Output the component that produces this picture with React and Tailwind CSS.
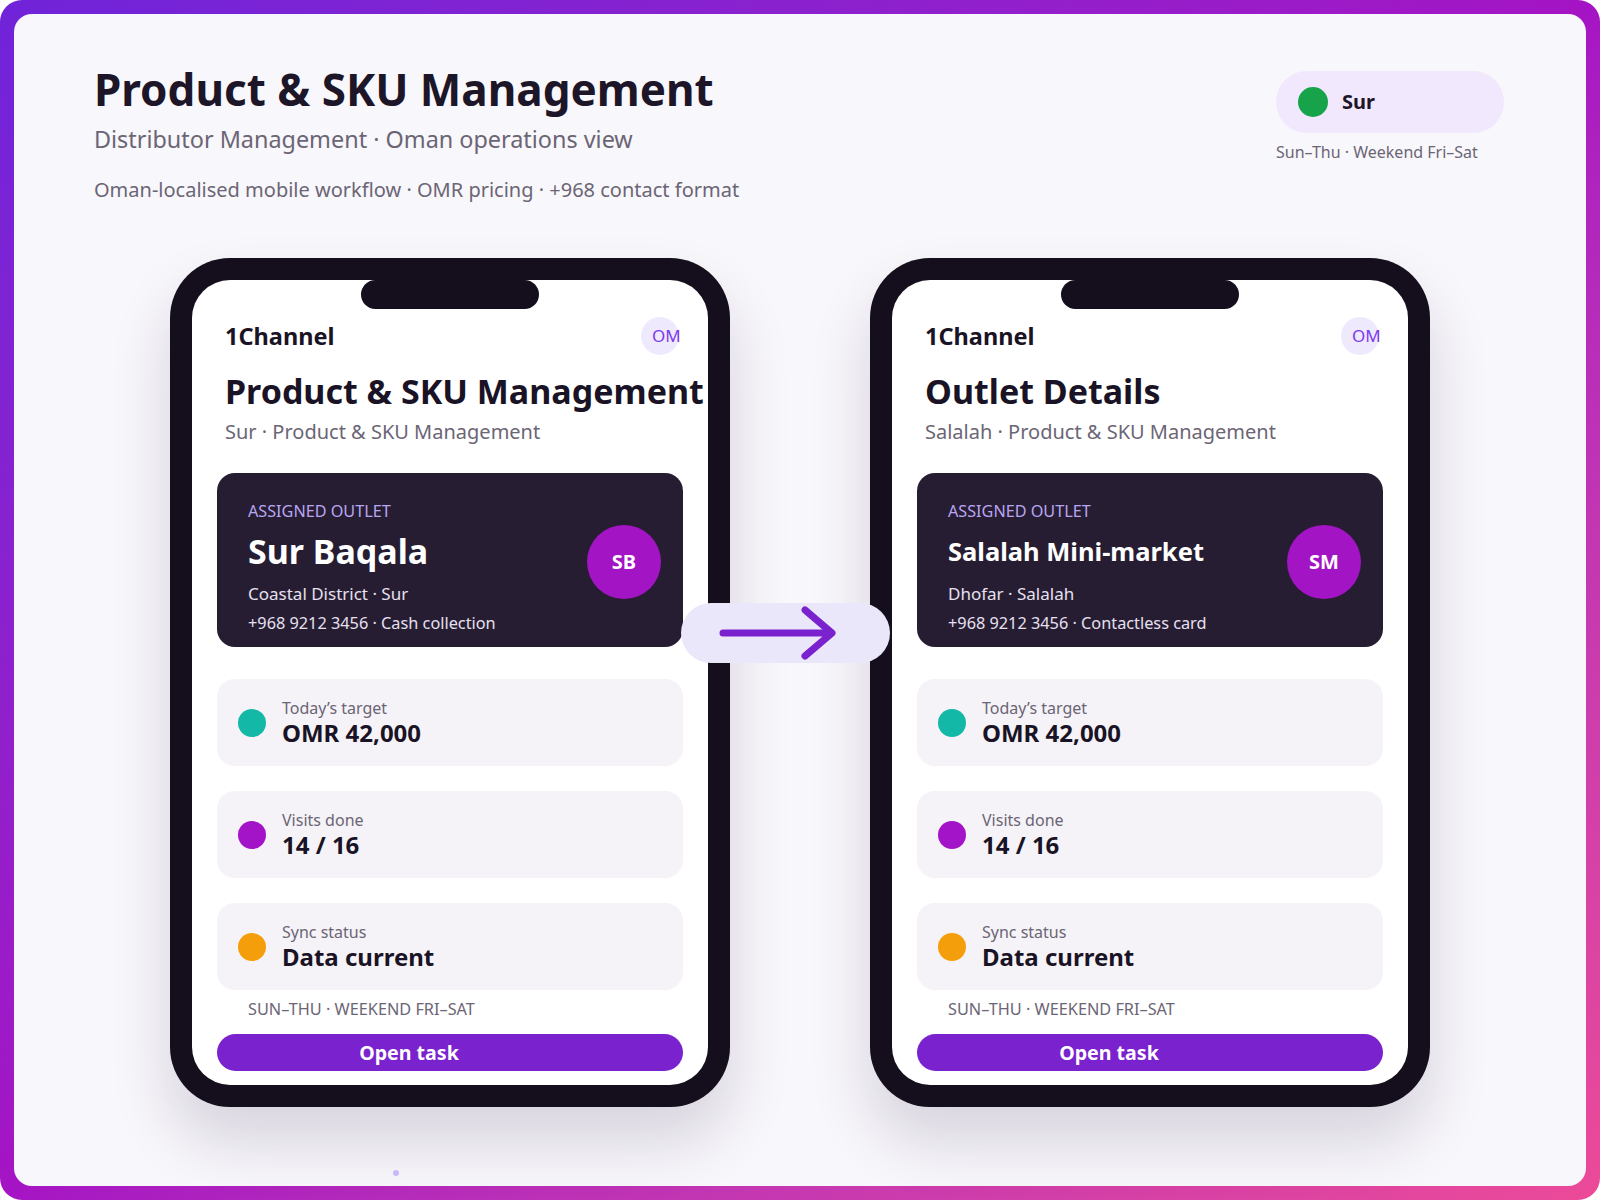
import React from 'react';

const font = { fontFamily: '"Noto Sans", "Open Sans", sans-serif' };

const stats = [
  { label: 'Today’s target', value: 'OMR 42,000', dot: 'bg-[#14b8a6]' },
  { label: 'Visits done', value: '14 / 16', dot: 'bg-[#a313c7]' },
  { label: 'Sync status', value: 'Data current', dot: 'bg-[#f59e0b]' },
];

const phones = [
  {
    title: 'Product & SKU Management',
    sub: 'Sur · Product & SKU Management',
    outlet: 'Sur Baqala',
    outletSize: 'text-[34px]',
    area: 'Coastal District · Sur',
    contact: '+968 9212 3456 · Cash collection',
    initials: 'SB',
  },
  {
    title: 'Outlet Details',
    sub: 'Salalah · Product & SKU Management',
    outlet: 'Salalah Mini-market',
    outletSize: 'text-[25.5px]',
    area: 'Dhofar · Salalah',
    contact: '+968 9212 3456 · Contactless card',
    initials: 'SM',
  },
];

const Phone = ({ p }) => (
  <div className="w-[560px] h-[849px] rounded-[60px] bg-[#150e1c] p-[22px] shadow-[0_34px_60px_rgba(45,25,70,0.16)]">
    <div className="relative h-full rounded-[38px] bg-white overflow-hidden flex flex-col">
      <div className="absolute top-0 left-[169px] w-[178px] h-[29px] rounded-full bg-[#150e1c]" />

      <div className="flex items-center justify-between pt-[37px] pl-[33px] pr-[29px]">
        <span className="text-[23.5px] leading-[38px] font-bold text-[#1a1325]">1Channel</span>
        <div className="w-[38px] h-[38px] rounded-full bg-[#efe9fd] flex items-center pl-[11px]">
          <span className="text-[17px] text-[#7c3aed]">OM</span>
        </div>
      </div>

      <div className="mt-[15px] pl-[33px] text-[34px] leading-[42px] font-bold text-[#1a1325] whitespace-nowrap">
        {p.title}
      </div>
      <div className="mt-[6px] pl-[33px] text-[20px] leading-[28px] text-[#6b6575]">{p.sub}</div>

      <div className="mt-[27px] mx-[25px] h-[174px] rounded-[18px] bg-[#261d33] flex items-center justify-between pl-[31px] pr-[22px]">
        <div className="self-start pt-[27px]">
          <div className="text-[16.2px] leading-[22px] text-[#b9a6f0] uppercase">Assigned outlet</div>
          <div className={`mt-[8px] ${p.outletSize} leading-[42px] font-bold text-white`}>{p.outlet}</div>
          <div className="mt-[10px] text-[17px] leading-[24px] text-[#e6e0ef]">{p.area}</div>
          <div className="mt-[6px] text-[16.3px] leading-[22px] text-[#e6e0ef]">{p.contact}</div>
        </div>
        <div className="mt-[4px] w-[74px] h-[74px] rounded-full bg-[#a314c4] flex items-center justify-center text-white text-[20px] font-bold">
          {p.initials}
        </div>
      </div>

      <div className="mt-[32px] mx-[25px] flex flex-col gap-[25px]">
        {stats.map((s) => (
          <div key={s.label} className="h-[87px] rounded-[18px] bg-[#f5f3f7] flex items-center pl-[21px] gap-[16px]">
            <div className={`w-[28px] h-[28px] rounded-full ${s.dot}`} />
            <div>
              <div className="text-[16px] leading-[20px] text-[#6b6575]">{s.label}</div>
              <div className="text-[24px] leading-[30px] font-bold text-[#1a1325]">{s.value}</div>
            </div>
          </div>
        ))}
      </div>

      <div className="mt-[8px] pl-[56px] text-[16.3px] leading-[22px] text-[#6b6575] uppercase">
        Sun–Thu · Weekend Fri–Sat
      </div>

      <button className="mt-[14px] mx-[25px] h-[37px] rounded-full bg-[#7b22cf] text-white text-[19.6px] font-bold pr-[82px]">
        Open task
      </button>
    </div>
  </div>
);

export default function App() {
  return (
    <div style={font} className="w-[1600px] h-[1200px] p-[14px] rounded-[22px] bg-gradient-to-br from-[#7023d9] via-[#a514c4] to-[#ec4a98]">
      <div className="relative h-full rounded-[18px] bg-[#f8f7fb] pt-[50px]">
        <div className="flex justify-between pl-[80px] pr-[82px]">
          <div>
            <h1 className="text-[44px] leading-[50px] font-bold text-[#1d1528]">Product &amp; SKU Management</h1>
            <p className="mt-[10px] text-[23.4px] leading-[30px] text-[#6b6575]">
              Distributor Management · Oman operations view
            </p>
            <p className="mt-[23px] text-[20px] leading-[26px] text-[#6b6575]">
              Oman-localised mobile workflow · OMR pricing · +968 contact format
            </p>
          </div>
          <div className="mt-[7px] w-[228px]">
            <div className="h-[62px] rounded-full bg-[#f1e8fd] flex items-center pl-[22px] gap-[14px]">
              <div className="w-[30px] h-[30px] rounded-full bg-[#16a34a]" />
              <span className="text-[20px] font-bold text-[#1d1528]">Sur</span>
            </div>
            <div className="mt-[8px] text-[16px] leading-[22px] text-[#6b6575]">Sun–Thu · Weekend Fri–Sat</div>
          </div>
        </div>

        <div className="mt-[55px] flex justify-center gap-[140px]">
          {phones.map((p) => (
            <Phone key={p.initials} p={p} />
          ))}
        </div>

        <div className="absolute left-[667px] top-[589px] w-[209px] h-[60px] rounded-full bg-[#ebe7fb]">
          <svg width="209" height="60" viewBox="0 0 209 60" fill="none">
            <path
              d="M42 30 H150 M124 7 L151 30 L124 53"
              stroke="#7b22cf"
              strokeWidth="7"
              strokeLinecap="round"
              strokeLinejoin="round"
            />
          </svg>
        </div>

        <div className="absolute left-[379px] top-[1156px] w-[6px] h-[6px] rounded-full bg-[#c9b8f5]" />
      </div>
    </div>
  );
}
